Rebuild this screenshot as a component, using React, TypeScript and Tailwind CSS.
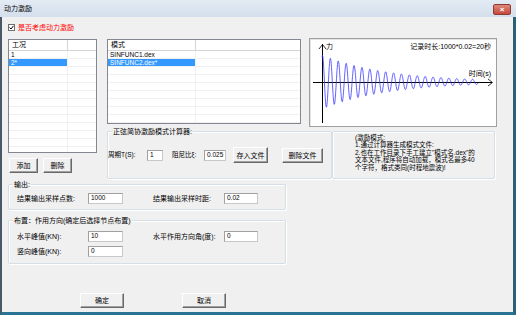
import React from "react";

const F = { fontFamily: '"Liberation Sans", "Noto Sans CJK SC", sans-serif' };

function Btn({ w, label, cls = "" }: { w: string; label: string; cls?: string }) {
  return (
    <div
      className={`${w} ${cls} h-[15px] flex items-center justify-center bg-[#f0f0f0] border border-t-white border-l-white border-r-[#696969] border-b-[#696969] shadow-[inset_-1px_-1px_0_#a0a0a0] text-[7px] leading-none text-black`}
    >
      {label}
    </div>
  );
}

function Input({ w, value }: { w: string; value: string }) {
  return (
    <div
      className={`${w} h-[11px] bg-white border border-[#c8c8c8] border-t-[#a0a0a0] border-l-[#a0a0a0] flex items-center pl-[2px] text-[6.5px] leading-none text-black`}
    >
      {value}
    </div>
  );
}

function ListView({
  w,
  h,
  col,
  header,
  rows,
  selected,
  totalRows,
}: {
  w: string;
  h: string;
  col: string;
  header: string;
  rows: string[];
  selected: number;
  totalRows: number;
}) {
  const all = Array.from({ length: totalRows }, (_, i) => rows[i] ?? "");
  return (
    <div className={`${w} ${h} bg-white border border-[#828790] overflow-hidden flex flex-col`}>
      <div className="h-[11px] flex border-b border-[#d5d5d5] shrink-0">
        <div className={`${col} border-r border-[#d5d5d5] pl-[3px] text-[7px] leading-[10px] text-black`}>
          {header}
        </div>
        <div className="flex-1" />
      </div>
      {all.map((r, i) => (
        <div key={i} className="h-[8px] flex border-b border-[#f0f0f0] shrink-0">
          <div
            className={`${col} pl-[2px] border-r border-[#f0f0f0] text-[6.5px] leading-[8px] ${
              i === selected ? "bg-[#3399ff] text-white" : "text-black"
            }`}
          >
            {r}
          </div>
          <div className="flex-1" />
        </div>
      ))}
    </div>
  );
}

function Group({
  cls,
  label,
  children,
}: {
  cls: string;
  label?: string;
  children?: React.ReactNode;
}) {
  return (
    <div className={`relative border border-[#d5dfe5] rounded-[2px] shadow-[inset_1px_1px_0_white,1px_1px_0_white] ${cls}`}>
      {label && (
        <div className="absolute -top-[5px] left-[4px] bg-[#f0f0f0] px-[1px] text-[7px] leading-[9px] text-black whitespace-nowrap">
          {label}
        </div>
      )}
      {children}
    </div>
  );
}

function Chart() {
  const pts: string[] = [];
  for (let x = 12; x <= 168; x += 0.25) {
    const t = x - 12;
    const a = 27 * Math.exp(-0.0153 * t);
    const y = 43 - a * Math.sin((2 * Math.PI * t) / 7.9 + 1.2);
    pts.push(`${x.toFixed(2)},${y.toFixed(2)}`);
  }
  return (
    <div className="w-[188px] h-[89px] bg-white border border-[#a0a0a0] shadow-[inset_1px_1px_0_#e3e3e3]">
      <svg width="186" height="87" viewBox="0 0 186 87" style={F}>
        <line x1="12.5" y1="5" x2="12.5" y2="84" stroke="#000" strokeWidth="1" />
        <polyline points="9,10 12.5,5.5 16,10" fill="none" stroke="#000" strokeWidth="0.8" />
        <line x1="3" y1="43.5" x2="182" y2="43.5" stroke="#000" strokeWidth="1" />
        <polyline points="178,40 182.5,43.5 178,47" fill="none" stroke="#000" strokeWidth="0.8" />
        <text x="16" y="10" fontSize="7" fill="#000">力</text>
        <text x="181" y="10" fontSize="7" fill="#000" textAnchor="end">记录时长:1000*0.02=20秒</text>
        <text x="181" y="37" fontSize="7" fill="#000" textAnchor="end">时间(s)</text>
        <polyline points={pts.join(" ")} fill="none" stroke="#3b3bff" strokeWidth="0.8" />
      </svg>
    </div>
  );
}

export default function App() {
  return (
    <div className="w-[516px] h-[315px] flex flex-col bg-[#f0f0f0] overflow-hidden" style={F}>
      {/* title bar */}
      <div className="h-[17px] shrink-0 flex items-center justify-between bg-gradient-to-b from-[#e3ebf4] to-[#d3dfec] pl-[4px] pr-[5px]">
        <span className="text-[7px] leading-none text-black">动力激励</span>
        <div className="w-[18px] h-[11px] mt-[2px] rounded-[2px] bg-gradient-to-b from-[#e0877a] to-[#c4493a] border border-[#8f3a30] flex items-center justify-center text-white text-[8px] leading-none font-bold">
          ×
        </div>
      </div>

      {/* body */}
      <div className="flex-1 flex flex-col pl-[6px] border-l-2 border-l-[#4a5866] border-r-[3px] border-r-[#2c5f78] border-b-[3px] border-b-[#2b7395]">
        {/* checkbox row */}
        <div className="mt-[6px] h-[8px] flex items-center">
          <div className="w-[7px] h-[7px] border border-[#707070] bg-white flex items-center justify-center">
            <svg width="5" height="5" viewBox="0 0 5 5">
              <polyline points="0.5,2.5 2,4 4.5,0.8" fill="none" stroke="#000" strokeWidth="1" />
            </svg>
          </div>
          <span className="ml-[3px] text-[7px] leading-none text-[#ff0000]">是否考虑动力激励</span>
        </div>

        {/* main row */}
        <div className="mt-[7px] flex">
          <div className="w-[89px] flex flex-col">
            <div className="mt-[1px]">
              <ListView w="w-[89px]" h="h-[114px]" col="w-[59px]" header="工况" rows={["1", "2*"]} selected={1} totalRows={13} />
            </div>
            <div className="mt-[5px] flex">
              <Btn w="w-[29px]" label="添加" cls="ml-[1px]" />
              <Btn w="w-[29px]" label="删除" cls="ml-[5px]" />
            </div>
          </div>

          <div className="ml-[10px] flex flex-col">
            <div className="flex items-start">
              <div className="mt-[1px]">
                <ListView
                  w="w-[194px]"
                  h="h-[85px]"
                  col="w-[88px]"
                  header="模式"
                  rows={["SINFUNC1.dex", "SINFUNC2.dex*"]}
                  selected={1}
                  totalRows={9}
                />
              </div>
              <div className="ml-[8px]">
                <Chart />
              </div>
            </div>
            <div className="mt-[4px] flex">
              <Group cls="w-[225px] h-[48px]" label="正弦简协激励模式计算器:">
                <div className="mt-[15px] flex items-center">
                  <span className="w-[39px] text-[6.5px] leading-none whitespace-nowrap">周期T(S):</span>
                  <Input w="w-[16px]" value="1" />
                  <span className="ml-[9px] w-[32px] text-[6.5px] leading-none whitespace-nowrap">阻尼比ξ:</span>
                  <Input w="w-[22px]" value="0.025" />
                  <Btn w="w-[35px]" label="存入文件" cls="ml-[7px] h-[16px]" />
                  <Btn w="w-[41px]" label="删除文件" cls="ml-[14px]" />
                </div>
              </Group>
              <Group cls="w-[163px] h-[48px]">
                <div className="pl-[22px] pt-[2px] text-[6.5px] leading-[7.4px] text-black whitespace-nowrap">
                  <div>(激励模式:</div>
                  <div>1.通过计算器生成模式文件:</div>
                  <div>2.也在工作目录下手工建立"模式名.dex"的</div>
                  <div>文本文件,程序将自动加载，模式名最多40</div>
                  <div>个字符，格式类同(时程地震波)!</div>
                </div>
              </Group>
            </div>
          </div>
        </div>

        {/* output group */}
        <Group cls="mt-[5px] w-[278px] h-[26px]" label="输出:">
          <div className="mt-[8px] flex items-center pl-[8px]">
            <span className="w-[71px] text-[7px] leading-none whitespace-nowrap">结果输出采样点数:</span>
            <Input w="w-[35px]" value="1000" />
            <span className="ml-[30px] w-[71px] text-[7px] leading-none whitespace-nowrap">结果输出采样时距:</span>
            <Input w="w-[34px]" value="0.02" />
          </div>
        </Group>

        {/* layout group */}
        <Group cls="mt-[10px] w-[278px] h-[44px]" label="布置：作用方向(确定后选择节点布置)">
          <div className="mt-[10px] flex items-center pl-[8px]">
            <span className="w-[71px] text-[7px] leading-none whitespace-nowrap">水平峰值(KN):</span>
            <Input w="w-[35px]" value="10" />
            <span className="ml-[30px] w-[71px] text-[7px] leading-none whitespace-nowrap">水平作用方向角(度):</span>
            <Input w="w-[34px]" value="0" />
          </div>
          <div className="mt-[4px] flex items-center pl-[8px]">
            <span className="w-[71px] text-[7px] leading-none whitespace-nowrap">竖向峰值(KN):</span>
            <Input w="w-[35px]" value="0" />
          </div>
        </Group>

        {/* bottom buttons */}
        <div className="mt-[29px] flex">
          <Btn w="w-[44px]" label="确定" cls="ml-[72px]" />
          <Btn w="w-[44px]" label="取消" cls="ml-[58px]" />
        </div>
      </div>
    </div>
  );
}
